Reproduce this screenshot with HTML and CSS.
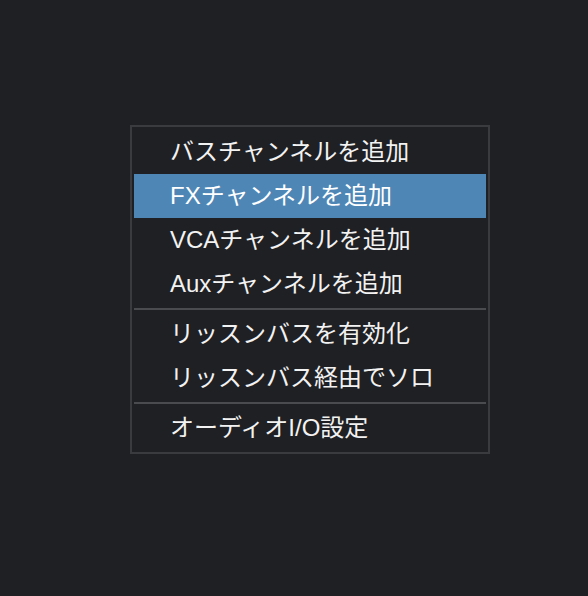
FILE: index.html
```html
<!DOCTYPE html>
<html lang="ja">
<head>
<meta charset="utf-8">
<link rel="stylesheet" href="styles.css">
</head>
<body>
<div class="stage">
  <div class="menu">
    <div class="item">バスチャンネルを追加</div>
    <div class="item active">FXチャンネルを追加</div>
    <div class="item">VCAチャンネルを追加</div>
    <div class="item">Auxチャンネルを追加</div>
    <div class="sep"></div>
    <div class="item">リッスンバスを有効化</div>
    <div class="item">リッスンバス経由でソロ</div>
    <div class="sep"></div>
    <div class="item">オーディオI/O設定</div>
  </div>
</div>
</body>
</html>
```

FILE: styles.css
```css
html, body {
  margin: 0;
  padding: 0;
  background: #1f2023;
}
body {
  width: 588px;
  height: 596px;
  overflow: hidden;
  font-family: "Liberation Sans", "Noto Sans CJK JP", sans-serif;
  color: #f2f2f2;
}
.stage {
  padding: 125px 0 0 130px;
}
.menu {
  width: 352px;
  border: 2px solid #3a3b3e;
  padding: 3px 2px 2px 2px;
  background: #1f2023;
}
.item {
  height: 44px;
  line-height: 43px;
  font-size: 24px;
  padding-left: 36px;
  white-space: nowrap;
}
.item.active {
  background: #4e86b6;
  color: #ffffff;
}
.sep {
  height: 2px;
  margin: 2px 0 2px 0;
  background: #4a4b4f;
}
```
